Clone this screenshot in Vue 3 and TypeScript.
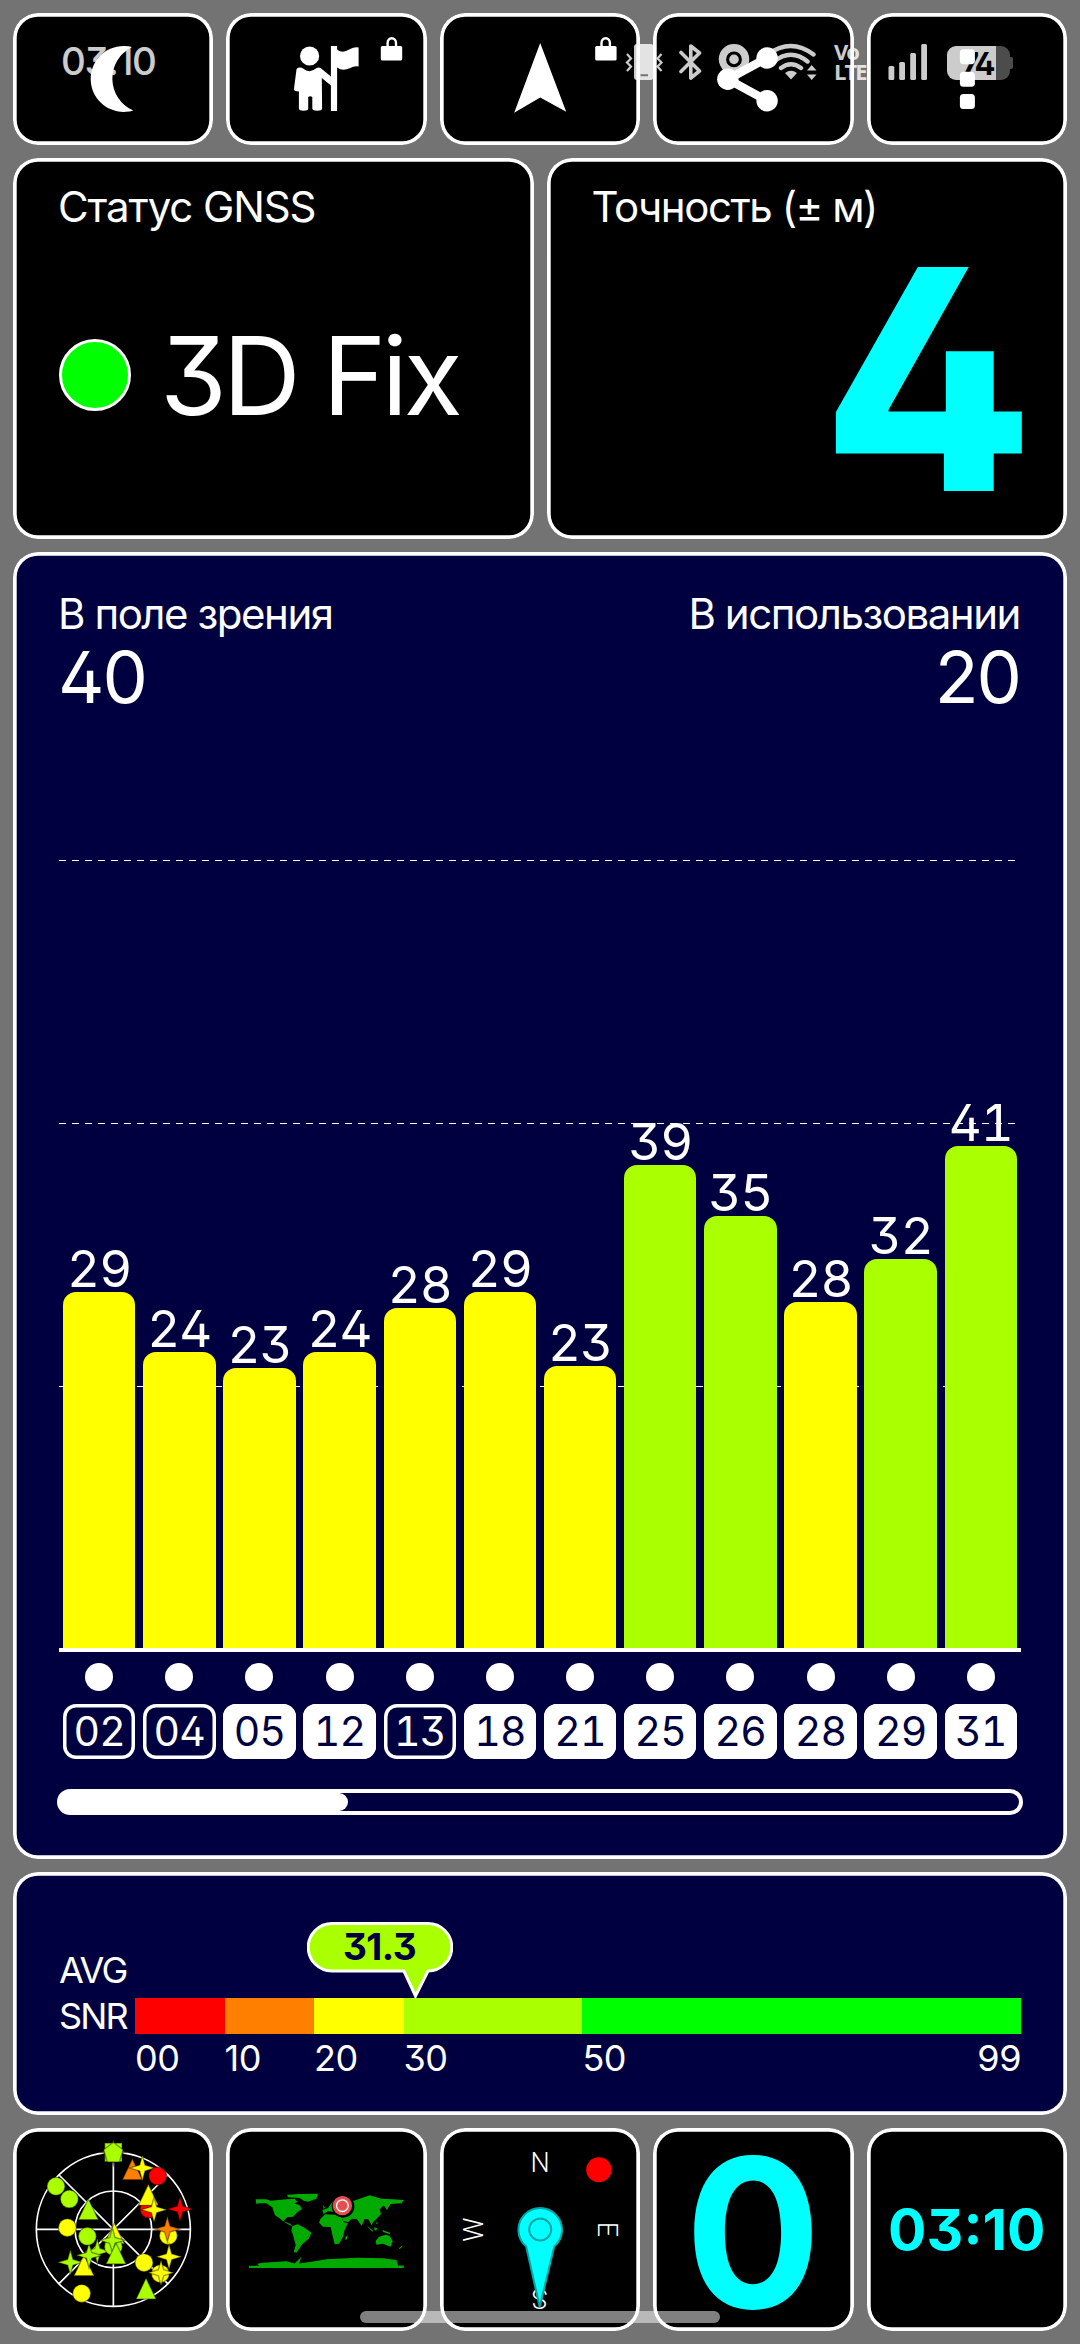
<template>
  <div class="screen">
    <header class="row tools">
      <button class="tile tool" type="button" aria-label="Night mode">
        <svg class="tool-icon" viewBox="13 13 200.4 132">
          <path d="M132 47A33 33 0 1 0 133.3 110.5A35 35 0 0 1 132 47Z" />
        </svg>
      </button>
      <button class="tile tool" type="button" aria-label="Waypoint">
        <svg class="tool-icon" viewBox="226.4 13 200.4 132">
          <circle cx="310" cy="56" r="9.6" />
          <path
            d="M300.500 67.500Q297 67.300 296.800 70L294.300 89.500Q294.500 91.300 299.300 91.500V108.500Q299.500 110.700 304 110.700Q308.500 110.700 308.600 108.500V97Q310.600 95.600 312.700 97V108.500Q313 110.700 317.500 110.700Q322.300 110.700 322.500 108.500L322.200 78L331.300 85.500V76.500L321 68Q319 66.800 317 68Q310 74 303.500 68.500Q302 67.500 300.500 67.500Z"
          />
          <path d="M331.300 46H337.500V49.500Q343 54 350 49.300Q355 46.500 359 47.500V66.500Q355 65.500 350 68.300Q343 71.500 337.500 67.500V111H331.300Z" />
          <rect x="381.200" y="46" width="21.400" height="14.500" rx="1.500" />
          <path class="shackle" d="M388 47V43A4.200 4.800 0 0 1 396.400 43V47" />
        </svg>
      </button>
      <button class="tile tool" type="button" aria-label="Navigate">
        <svg class="tool-icon" viewBox="439.800 13 200.4 132">
          <path d="M540 43L566 111.800L540 97.500L514 112.700Z" />
          <rect x="595" y="46" width="21.400" height="14.500" rx="1.500" />
          <path class="shackle" d="M601.300 47V43A4.200 4.800 0 0 1 609.700 43V47" />
        </svg>
      </button>
      <button class="tile tool" type="button" aria-label="Share">
        <svg class="tool-icon" viewBox="653.200 13 200.4 132">
          <path class="share-line" d="M767.300 58L728 79.300L767.300 100.700" />
          <circle cx="767.300" cy="58" r="10.700" />
          <circle cx="728" cy="79.300" r="10.700" />
          <circle cx="767.300" cy="100.700" r="10.700" />
        </svg>
      </button>
      <button class="tile tool" type="button" aria-label="Menu">
        <svg class="tool-icon" viewBox="866.600 13 200.4 132">
          <rect x="959.500" y="49.300" width="15" height="15" rx="3.500" />
          <rect x="959.500" y="71.800" width="15" height="15" rx="3.500" />
          <rect x="959.500" y="94" width="15" height="15" rx="3.500" />
        </svg>
      </button>
    </header>

    <section class="row cards">
      <div class="tile card">
        <div class="label status-label">Статус GNSS</div>
        <div class="fix">
          <span class="fix-dot"></span>
          <span class="fix-text">3D Fix</span>
        </div>
      </div>
      <div class="tile card">
        <div class="label accuracy-label">Точность (± м)</div>
        <div class="accuracy">4</div>
      </div>
    </section>

    <section class="tile panel signal">
      <div class="counts">
        <div>
          <div class="label view-label">В поле зрения</div>
          <div class="count">40</div>
        </div>
        <div class="right">
          <div class="label use-label">В использовании</div>
          <div class="count">20</div>
        </div>
      </div>

      <div class="plot">
        <svg class="grid-lines" viewBox="0 0 962 935" width="962" height="935">
          <line v-for="y in gridLines" :key="y" x1="0" :y1="y" x2="956" :y2="y" />
        </svg>
        <div v-for="sat in satellites" :key="sat.id" class="bar-col">
          <span class="snr">{{ sat.snr }}</span>
          <div
            class="bar"
            :class="{ good: sat.snr >= 30 }"
            :style="{ height: sat.height + 'px' }"
          ></div>
        </div>
      </div>

      <div class="ids">
        <div v-for="sat in satellites" :key="sat.id" class="id-col">
          <span class="sat-dot"></span>
          <span class="chip" :class="{ used: sat.used }">{{ sat.id }}</span>
        </div>
      </div>

      <div class="scroll"><div class="thumb"></div></div>
    </section>

    <section class="tile panel average">
      <div class="avg-label">AVG<br />SNR</div>
      <div class="scale">
        <div class="scale-bar">
          <div
            v-for="seg in segments"
            :key="seg.from"
            class="seg"
            :style="{ flexGrow: seg.to - seg.from, background: seg.color }"
          ></div>
        </div>
        <div class="scale-nums">
          <div
            v-for="seg in segments"
            :key="seg.from"
            class="num"
            :style="{ flexGrow: seg.to - seg.from }"
          >
            <span>{{ seg.label }}</span>
            <span v-if="seg.to === 99">99</span>
          </div>
        </div>
        <div class="bubble">
          <svg viewBox="0 0 146 77" width="146" height="77">
            <path d="M25 1.500H121A23.700 23.700 0 0 1 121 49L108.500 74L97 49H25A23.700 23.700 0 0 1 25 1.500Z" />
          </svg>
          <span class="bubble-text">31.3</span>
        </div>
      </div>
    </section>

    <footer class="row">
      <div class="tile">
        <svg class="fill" viewBox="39 24 601 609">
          <g class="sky">
            <circle cx="340" cy="328" r="231" />
            <circle cx="340" cy="328" r="115" />
            <path d="M340 97V559M109 328H571M177 165L503 491M177 491L503 165" />
          </g>
          <g
            v-for="(m, i) in markers"
            :key="i"
            class="marker"
            :transform="`translate(${m.x} ${m.y})`"
          >
            <path :d="shapes[m.shape]" :fill="m.color" />
          </g>
        </svg>
      </div>
      <div class="tile">
        <svg class="fill" viewBox="679 24 601 609">
          <g class="land">
            <path
              d="M768 238H800L812 242L860 238L885 236L893 246L884 250L900 256L906 268L893 276L880 290L862 292L851 304L866 309L880 317L870 316L850 304L838 294L826 286L818 262L800 250H780L770 252Z"
            />
            <path d="M862 224L900 222L955 221L950 236L925 245L912 242L900 234L865 232Z" />
            <path
              d="M878 318L894 313L912 322L935 338L927 356L908 372L894 392L890 398L882 396L888 375L880 345L875 332Z"
            />
            <path
              d="M962 297L976 283L1006 284L1024 290L1032 307L1044 309L1034 332L1030 350L1018 371L1005 373L998 345L993 321L970 320L958 308Z"
            />
            <path
              d="M968 270L985 264L1000 243L1020 235L1060 243L1110 226L1145 236L1180 238L1212 240L1206 250L1172 252L1162 270L1152 256L1140 268L1144 282L1130 297L1120 306L1116 316L1105 297L1094 298L1086 318L1072 298L1056 296L1045 307L1030 302L1022 282L1004 276L985 274L972 282Z"
            />
            <path d="M1128 362L1138 350L1158 344L1170 348L1179 364L1172 380L1150 371L1130 374Z" />
            <path d="M1037 350L1044 346L1042 358L1037 360ZM1103 318L1120 332L1118 335L1105 322ZM1124 322L1132 324L1130 332L1124 330ZM1148 330L1170 338L1172 343L1150 336ZM1198 384L1209 376L1206 382L1199 388ZM1130 304L1134 312L1130 312ZM970 256L976 262L972 268Z" />
            <path
              d="M748 437H778L772 431L790 428L860 424L885 430L905 410L898 430L945 424L980 418L1070 413L1150 415L1190 420L1195 436H1212V444H748Z"
            />
          </g>
          <circle class="here-gap" cx="1030" cy="259" r="34" />
          <circle class="here-fill" cx="1028" cy="257" r="29" />
          <circle class="here-ring" cx="1028" cy="257" r="17.500" />
        </svg>
      </div>
      <div class="tile">
        <svg class="fill" viewBox="439.800 2128 200.400 203">
          <g class="compass-text">
            <text x="540" y="2171.500">N</text>
            <text transform="translate(482.500 2229.500) rotate(-90)">W</text>
            <text transform="translate(597.500 2229.500) rotate(90)">E</text>
            <text transform="translate(539.500 2288.500) rotate(180)">S</text>
          </g>
          <ellipse cx="598.700" cy="2169.700" rx="12.700" ry="12.500" fill="#f00" />
          <path
            class="needle"
            d="M526 2246.500A21.800 21.800 0 1 1 554 2246.500L539.500 2307Z"
          />
          <circle class="needle" cx="540" cy="2229.500" r="11" />
        </svg>
      </div>
      <div class="tile center"><span class="speed">0</span></div>
      <div class="tile center"><span class="clock">03:10</span></div>
    </footer>

    <div class="statusbar">
      <span class="status-time">03:10</span>
      <svg class="s-icon vibrate" viewBox="625 43 39 38" width="39" height="38">
        <path d="M637 44H650.500Q653.500 44 653.500 47V77Q653.500 80 650.500 80H637Q634 80 634 77V47Q634 44 637 44ZM640.500 74.300V76.300H648V74.300Z" fill-rule="evenodd" />
        <path class="zig" d="M627 54L631 58.500L627 62.500L631 66.500L627 71M661.500 54L657.500 58.500L661.500 62.500L657.500 66.500L661.500 71" />
      </svg>
      <svg class="s-icon bt" viewBox="679 43 23 38" width="23" height="38">
        <path d="M681 52.500L699.500 71L690.800 78V46L699.500 53L681 71.500" />
      </svg>
      <svg class="s-icon loc" viewBox="718 43 32 38" width="32" height="38">
        <path d="M734 44A15.300 15.300 0 0 1 749.300 59.300C749.300 68 740 76 734 81C728 76 718.700 68 718.700 59.300A15.300 15.300 0 0 1 734 44ZM734 51.500A7.900 7.900 0 1 0 734 67.300A7.900 7.900 0 1 0 734 51.500Z" fill-rule="evenodd" />
        <circle cx="734" cy="59.400" r="4.800" />
      </svg>
      <svg class="s-icon wifi" viewBox="765 43 52 38" width="52" height="38">
        <path class="arc" d="M767.500 54.500Q791 37.500 813.500 54.500M774 61.500Q791 48 807.500 61.500M781 68Q791 60.500 801 68" />
        <path d="M785 73Q791 68.500 797 73L791 79.500ZM811.700 65L816.500 70.500H807ZM811.700 80L816.500 74.500H807Z" />
      </svg>
      <span class="volte">Vo<br />LTE</span>
      <svg class="s-icon bars" viewBox="888 43 40 38" width="40" height="38">
        <rect x="888.500" y="66" width="5.800" height="14" rx="1.500" />
        <rect x="899.200" y="62" width="5.800" height="18" rx="1.500" />
        <rect x="910.200" y="53" width="5.800" height="27" rx="1.500" />
        <rect x="921.200" y="44" width="5.800" height="36" rx="1.500" />
      </svg>
      <div class="battery"><span>74</span></div>
    </div>
    <div class="home-bar"></div>
  </div>
</template>

<script setup lang="ts">
interface Satellite {
  id: string;
  snr: number;
  height: number;
  used: boolean;
}

const satellites: Satellite[] = [
  { id: "02", snr: 29, height: 356, used: false },
  { id: "04", snr: 24, height: 296, used: false },
  { id: "05", snr: 23, height: 280, used: true },
  { id: "12", snr: 24, height: 296, used: true },
  { id: "13", snr: 28, height: 340, used: false },
  { id: "18", snr: 29, height: 356, used: true },
  { id: "21", snr: 23, height: 282, used: true },
  { id: "25", snr: 39, height: 483, used: true },
  { id: "26", snr: 35, height: 432, used: true },
  { id: "28", snr: 28, height: 346, used: true },
  { id: "29", snr: 32, height: 389, used: true },
  { id: "31", snr: 41, height: 502, used: true },
];

const gridLines = [147.5, 410.5, 673.5];

const segments = [
  { from: 0, to: 10, label: "00", color: "#ff0000" },
  { from: 10, to: 20, label: "10", color: "#ff8000" },
  { from: 20, to: 30, label: "20", color: "#ffff00" },
  { from: 30, to: 50, label: "30", color: "#aaff00" },
  { from: 50, to: 99, label: "50", color: "#00ff00" },
];

type Shape = "circle" | "triangle" | "star" | "pentagon" | "square";

const shapes: Record<Shape, string> = {
  circle: "M-27 0A27 27 0 1 1 27 0A27 27 0 1 1 -27 0Z",
  triangle: "M0 -34L30 29H-30Z",
  star: "M0 -38L8 -9L38 0L8 9L0 38L-8 9L-38 0L-8 -9Z",
  pentagon: "M0 -31L29 -9L18 28H-18L-29 -9Z",
  square: "M-26 -28H26V28H-26Z",
};

const RED = "#ff0000";
const ORANGE = "#ff8000";
const YELLOW = "#ffff00";
const LIME = "#aaff00";

const markers: { shape: Shape; x: number; y: number; color: string }[] = [
  { shape: "star", x: 340, y: 97, color: ORANGE },
  { shape: "square", x: 340, y: 97, color: LIME },
  { shape: "pentagon", x: 340, y: 98, color: LIME },
  { shape: "triangle", x: 397, y: 150, color: ORANGE },
  { shape: "star", x: 427, y: 144, color: YELLOW },
  { shape: "circle", x: 473, y: 168, color: RED },
  { shape: "circle", x: 447, y: 267, color: RED },
  { shape: "triangle", x: 445, y: 227, color: YELLOW },
  { shape: "star", x: 462, y: 269, color: YELLOW },
  { shape: "star", x: 540, y: 267, color: RED },
  { shape: "circle", x: 505, y: 347, color: YELLOW },
  { shape: "star", x: 502, y: 327, color: ORANGE },
  { shape: "star", x: 507, y: 410, color: YELLOW },
  { shape: "circle", x: 432, y: 428, color: YELLOW },
  { shape: "circle", x: 481, y: 461, color: YELLOW },
  { shape: "star", x: 483, y: 458, color: YELLOW },
  { shape: "triangle", x: 438, y: 508, color: LIME },
  { shape: "circle", x: 245, y: 520, color: YELLOW },
  { shape: "star", x: 211, y: 427, color: LIME },
  { shape: "triangle", x: 252, y: 438, color: YELLOW },
  { shape: "star", x: 292, y: 394, color: LIME },
  { shape: "star", x: 267, y: 406, color: LIME },
  { shape: "circle", x: 262, y: 349, color: LIME },
  { shape: "circle", x: 202, y: 323, color: YELLOW },
  { shape: "circle", x: 168, y: 199, color: LIME },
  { shape: "circle", x: 208, y: 237, color: LIME },
  { shape: "triangle", x: 265, y: 270, color: LIME },
  { shape: "triangle", x: 343, y: 342, color: YELLOW },
  { shape: "circle", x: 340, y: 380, color: LIME },
  { shape: "star", x: 337, y: 361, color: LIME },
  { shape: "triangle", x: 348, y: 403, color: LIME },
];
</script>

<style>
body {
  background: #737373;
}
</style>

<style scoped>
.screen {
  position: relative;
  box-sizing: border-box;
  width: 1080px;
  height: 2344px;
  padding: 13px;
  display: grid;
  grid-template-rows: 132px 381px 1307px 243px 203px;
  gap: 13px;
  background: #737373;
  color: #fff;
  font-family: Inter, "Noto Sans", sans-serif;
  font-feature-settings: "cv02", "cv09";
  overflow: hidden;
}

.row {
  display: grid;
  grid-template-columns: repeat(5, 1fr);
  gap: 13px;
}

.cards {
  grid-template-columns: repeat(2, 1fr);
}

.tile {
  box-sizing: border-box;
  min-width: 0;
  border-radius: 25px;
  background: #000;
  box-shadow: inset 0 0 0 3.7px #fff;
}

.tool {
  border: 0;
  padding: 0;
}

.tool-icon {
  position: relative;
  z-index: 2;
  display: block;
  width: 100%;
  height: 100%;
  fill: #fff;
}

.shackle {
  fill: none;
  stroke: #fff;
  stroke-width: 2.4;
}

.share-line {
  fill: none;
  stroke: #fff;
  stroke-width: 8.5;
}

.card {
  padding: 23px 45px 0;
}

.label {
  width: max-content;
  font-size: 42px;
  line-height: 52px;
  white-space: nowrap;
  letter-spacing: -1.45px;
}

.status-label {
  letter-spacing: -1.1px;
}

.fix {
  display: flex;
  align-items: center;
  height: 284px;
  gap: 31px;
}

.fix-dot {
  box-sizing: border-box;
  width: 72px;
  height: 72px;
  margin-left: 1px;
  border: 3px solid #fff;
  border-radius: 50%;
  background: #0f0;
}

.fix-text {
  margin-left: -2px;
  font-size: 108px;
  letter-spacing: -4.3px;
  white-space: nowrap;
}

.accuracy {
  height: 292px;
  line-height: 292px;
  margin-right: -12px;
  font-size: 308px;
  font-weight: 800;
  text-align: right;
  color: #0ff;
}

.panel {
  background: #000040;
}

.signal {
  padding: 36px 46px 0;
}

.counts {
  display: flex;
  justify-content: space-between;
  margin: 0 1px 0 -1px;
}

.right {
  text-align: right;
}

.right .label {
  margin-left: auto;
}

.count {
  font-size: 72px;
  line-height: 73px;
  letter-spacing: -2px;
}

.plot {
  position: relative;
  height: 935px;
  padding: 0 4px;
  display: grid;
  grid-template-columns: repeat(12, 1fr);
  column-gap: 7.8px;
  align-items: end;
  border-bottom: 4px solid #fff;
}

.grid-lines {
  position: absolute;
  left: 0;
  top: 0;
}

.grid-lines line {
  stroke: #fff;
  stroke-width: 1;
  stroke-dasharray: 7 6;
}

.bar-col {
  position: relative;
  display: flex;
  flex-direction: column;
  align-items: center;
}

.snr {
  font-size: 51px;
  line-height: 47px;
  font-variant-numeric: tabular-nums;
  letter-spacing: -1px;
}

.bar {
  width: 100%;
  border-radius: 13px 13px 0 0;
  background: #ff0;
}

.bar.good {
  background: #af0;
}

.ids {
  display: grid;
  grid-template-columns: repeat(12, 1fr);
  column-gap: 7.8px;
  padding: 11px 4px 0;
}

.id-col {
  display: flex;
  flex-direction: column;
  align-items: center;
  gap: 13px;
}

.sat-dot {
  width: 28px;
  height: 28px;
  border-radius: 50%;
  background: #fff;
}

.chip {
  box-sizing: border-box;
  width: 100%;
  height: 55px;
  line-height: 55px;
  border-radius: 13px;
  box-shadow: inset 0 0 0 3.5px #fff;
  font-size: 41px;
  font-variant-numeric: tabular-nums;
  letter-spacing: -0.8px;
  text-align: center;
}

.chip.used {
  background: #fff;
  color: #000040;
}

.scroll {
  box-sizing: border-box;
  height: 26px;
  margin: 30px -2px 0;
  border: 4px solid #fff;
  border-radius: 13px;
}

.thumb {
  width: 287px;
  height: 100%;
  border-radius: 0 9px 9px 0;
  background: #fff;
}

.average {
  display: flex;
  padding: 76px 46px 0;
}

.avg-label {
  width: 76px;
  font-size: 36px;
  line-height: 45.5px;
  letter-spacing: -1.8px;
}

.scale {
  position: relative;
  flex: 1;
  padding-top: 50px;
}

.scale-bar {
  display: flex;
  height: 36px;
}

.seg {
  flex: 0 0 0;
}

.scale-nums {
  display: flex;
  padding-top: 6px;
  font-size: 36px;
  line-height: 36px;
  letter-spacing: -0.5px;
}

.num {
  flex: 0 0 0;
  min-width: 0;
  display: flex;
  justify-content: space-between;
}

.bubble {
  position: absolute;
  left: 172px;
  top: -26px;
}

.bubble svg {
  display: block;
  fill: #af0;
  stroke: #fff;
  stroke-width: 3;
}

.bubble-text {
  position: absolute;
  left: 0;
  top: 1px;
  width: 145px;
  line-height: 48px;
  font-size: 37px;
  font-weight: 700;
  letter-spacing: -0.6px;
  text-align: center;
  color: #000040;
}

.fill {
  display: block;
  width: 100%;
  height: 100%;
}

.sky {
  fill: none;
  stroke: #fff;
  stroke-width: 5;
}

.marker {
  stroke: rgba(0, 0, 0, 0.4);
  stroke-width: 4;
}

.land {
  fill: #00aa00;
}

.here-gap {
  fill: #000;
}

.here-fill {
  fill: #e35053;
}

.here-ring {
  fill: none;
  stroke: #fff;
  stroke-width: 4;
}

.compass-text {
  fill: #fff;
  font-family: Roboto, sans-serif;
  font-weight: 300;
  font-size: 27px;
  text-anchor: middle;
}

.needle {
  fill: #0ff;
  stroke: #00a5a5;
  stroke-width: 2;
}

.center {
  display: flex;
  align-items: center;
  justify-content: center;
  color: #0ff;
  font-weight: 700;
}

.speed {
  padding-top: 6px;
  font-size: 208px;
  line-height: 197px;
  transform: scaleX(0.97);
}

.clock {
  font-size: 57px;
}

.statusbar {
  position: absolute;
  left: 0;
  top: 43px;
  z-index: 1;
  box-sizing: border-box;
  width: 1080px;
  height: 38px;
  padding-left: 61px;
  display: flex;
  opacity: 0.8;
}

.status-time {
  width: 564px;
  font-size: 38.5px;
  line-height: 37px;
  font-weight: 500;
  letter-spacing: -1.4px;
}

.s-icon {
  flex: none;
  fill: #fff;
}

.zig {
  fill: none;
  stroke: #fff;
  stroke-width: 2.2;
}

.bt {
  margin-left: 15px;
  fill: none;
  stroke: #fff;
  stroke-width: 3.6;
  stroke-linejoin: round;
  stroke-linecap: round;
}

.loc {
  margin-left: 16px;
}

.wifi {
  margin-left: 15px;
}

.arc {
  fill: none;
  stroke: #fff;
  stroke-width: 4.4;
  stroke-linecap: round;
}

.volte {
  width: 37px;
  margin: -2px 0 0 17px;
  font-family: "Open Sans", sans-serif;
  font-size: 22px;
  line-height: 20px;
  font-weight: 700;
  letter-spacing: -2px;
}

.bars {
  margin-left: 17px;
}

.battery {
  position: relative;
  width: 63px;
  height: 34px;
  margin: 3px 0 0 19px;
  border-radius: 9px;
  background: linear-gradient(90deg, #fff 49px, #606060 49px);
}

.battery::after {
  content: "";
  position: absolute;
  right: -3px;
  top: 11px;
  width: 3px;
  height: 12px;
  border-radius: 0 2px 2px 0;
  background: #606060;
}

.battery span {
  display: block;
  padding-left: 14px;
  color: #000;
  font-size: 31px;
  line-height: 35px;
  font-weight: 700;
  letter-spacing: -2.5px;
}

.home-bar {
  position: absolute;
  left: 360px;
  top: 2311px;
  width: 360px;
  height: 12px;
  border-radius: 6px;
  background: rgba(255, 255, 255, 0.5);
}
</style>
